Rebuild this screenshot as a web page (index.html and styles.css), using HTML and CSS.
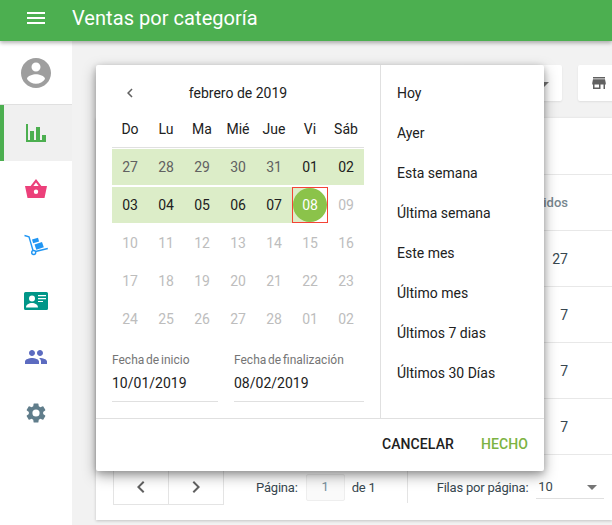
FILE: index.html
```html
<!DOCTYPE html>
<html lang="es">
<head>
<meta charset="utf-8">
<title>Ventas por categoría</title>
<link rel="stylesheet" href="styles.css">
</head>
<body>
<header class="topbar">
  <svg class="menu-icon" width="24" height="24" viewBox="0 0 24 24"><path fill="#fff" d="M3 18h18v-2H3v2zm0-5h18v-2H3v2zm0-7v2h18V6H3z"/></svg>
  <h1 class="title">Ventas por categoría</h1>
</header>
<div class="body">
  <nav class="sidebar">
    <div class="nav-user">
      <svg width="36" height="36" viewBox="0 0 24 24"><path fill="#9e9e9e" d="M12 2C6.48 2 2 6.48 2 12s4.48 10 10 10 10-4.48 10-10S17.52 2 12 2zm0 3c1.66 0 3 1.34 3 3s-1.34 3-3 3-3-1.34-3-3 1.34-3 3-3zm0 14.2c-2.5 0-4.71-1.28-6-3.22.03-1.99 4-3.08 6-3.08 1.99 0 5.97 1.09 6 3.08-1.29 1.94-3.5 3.22-6 3.22z"/></svg>
    </div>
    <div class="nav-item active">
      <svg width="24" height="24" viewBox="0 0 24 24"><path fill="#4caf50" d="M2 3h2v16h-2zM2 19h20v2H2zM6 10h4v10H6zM12 6h4v14h-4zM18 14h4v6h-4z"/></svg>
    </div>
    <div class="nav-item">
      <svg width="24" height="24" viewBox="0 0 24 24"><path fill="#ec407a" fill-rule="evenodd" d="M1 9H6.600L12 2l5.400 7H23L20.500 21H3.500L1 9zM9.300 9h5.400L12 5.500 9.300 9zM12 17a2.200 2.200 0 1 0 0-4.400 2.200 2.200 0 0 0 0 4.400z"/></svg>
    </div>
    <div class="nav-item">
      <svg width="24" height="24" viewBox="0 0 24 24"><path fill="none" stroke="#2196f3" stroke-width="1.400" d="M0.500 2.500L5 3.700 9 17.500M11.500 18.500L23.800 15.500"/><circle cx="9.700" cy="19.500" r="2" fill="none" stroke="#2196f3" stroke-width="1.400"/><path fill="#2196f3" d="M8 6.500l6-1.700 1.100 3.800-6 1.700zM10.500 11.500l7.500-2.500 1.800 5.300-7.500 2.400z"/></svg>
    </div>
    <div class="nav-item">
      <svg width="24" height="24" viewBox="0 0 24 24"><path fill="#009688" d="M1.500 3h21A1.500 1.500 0 0 1 24 4.500v15a1.500 1.500 0 0 1-1.500 1.500h-21A1.500 1.500 0 0 1 0 19.500v-15A1.500 1.500 0 0 1 1.500 3z"/><circle cx="8" cy="9.500" r="3" fill="#fff"/><path fill="#fff" d="M2 18.500c0-3 3-4.500 6-4.500s6 1.500 6 4.500zM14 6h8v1.300h-8zM14 9h8v1.300h-8zM14 12h5v1h-5z"/></svg>
    </div>
    <div class="nav-item">
      <svg width="24" height="24" viewBox="0 0 24 24"><path fill="#5c6bc0" d="M16 11c1.660 0 2.990-1.340 2.990-3S17.660 5 16 5c-1.660 0-3 1.340-3 3s1.340 3 3 3zm-8 0c1.660 0 2.990-1.340 2.990-3S9.660 5 8 5C6.340 5 5 6.340 5 8s1.340 3 3 3zm0 2c-2.330 0-7 1.170-7 3.500V19h14v-2.500c0-2.330-4.670-3.500-7-3.500zm8 0c-.29 0-.62.020-.97.050 1.160.84 1.970 1.970 1.970 3.450V19h6v-2.500c0-2.330-4.670-3.500-7-3.500z"/></svg>
    </div>
    <div class="nav-item">
      <svg width="24" height="24" viewBox="0 0 24 24"><path fill="#607d8b" d="M19.140 12.940c.04-.3.060-.61.060-.94 0-.32-.02-.64-.07-.94l2.030-1.580a.49.49 0 0 0 .12-.61l-1.920-3.320a.49.49 0 0 0-.59-.22l-2.390.96c-.5-.38-1.030-.7-1.620-.94l-.36-2.540a.48.48 0 0 0-.48-.41h-3.840a.48.48 0 0 0-.47.41l-.36 2.540c-.59.24-1.130.57-1.620.94l-2.390-.96a.48.48 0 0 0-.59.22L2.740 8.870a.48.48 0 0 0 .12.61l2.030 1.580c-.05.3-.09.63-.09.94s.02.640.07.94l-2.030 1.580a.49.49 0 0 0-.12.61l1.920 3.320c.12.22.37.29.59.22l2.390-.96c.5.380 1.030.7 1.620.94l.36 2.540c.05.24.24.41.48.41h3.840c.24 0 .44-.17.47-.41l.36-2.540c.59-.24 1.130-.56 1.620-.94l2.390.96c.22.080.47 0 .59-.22l1.920-3.320a.48.48 0 0 0-.12-.61l-2.010-1.580zM12 15.600a3.600 3.600 0 1 1 0-7.200 3.600 3.600 0 0 1 0 7.200z"/></svg>
    </div>
  </nav>
  <main class="content">
    <div class="toolbar">
      <div class="tool-select"><span class="caret"></span></div>
      <div class="tool-btn">
        <svg width="18" height="18" viewBox="0 0 24 24"><path fill="#616161" d="M20 4H4v2h16V4zm1 10v-2l-1-5H4l-1 5v2h1v6h10v-6h4v6h2v-6h1zm-9 4H6v-4h6v4z"/></svg>
      </div>
    </div>
    <section class="table-card">
      <div class="table-top"></div>
      <div class="table-row head"><span class="cell-head">Pedidos</span></div>
      <div class="table-row"><span class="cell">27</span></div>
      <div class="table-row"><span class="cell cell-b">7</span></div>
      <div class="table-row"><span class="cell cell-b">7</span></div>
      <div class="table-row"><span class="cell cell-b">7</span></div>
      <footer class="pager">
        <div class="pager-nav">
          <span class="pager-btn"><svg width="24" height="24" viewBox="0 0 24 24"><path fill="#616161" d="M15.410 7.410L14 6l-6 6 6 6 1.410-1.410L10.830 12z"/></svg></span>
          <span class="pager-btn"><svg width="24" height="24" viewBox="0 0 24 24"><path fill="#616161" d="M8.590 16.590L10 18l6-6-6-6-1.410 1.410L13.170 12z"/></svg></span>
        </div>
        <span class="pager-label">Página:</span>
        <span class="page-input">1</span>
        <span class="pager-of">de 1</span>
        <span class="pager-sep"></span>
        <span class="pager-rows">Filas por página:</span>
        <span class="rows-select">10<span class="caret dark"></span></span>
      </footer>
    </section>
  </main>
</div>

<div class="picker">
  <div class="picker-main">
    <div class="calendar">
      <div class="cal-head">
        <svg class="cal-prev" width="18" height="18" viewBox="0 0 24 24"><path fill="#616161" d="M15.410 7.410L14 6l-6 6 6 6 1.410-1.410L10.830 12z"/></svg>
        <span class="cal-month">febrero de 2019</span>
      </div>
      <div class="weekdays">
        <span>Do</span><span>Lu</span><span>Ma</span><span>Mié</span><span>Jue</span><span>Vi</span><span>Sáb</span>
      </div>
      <div class="week range first"><span class="muted">27</span><span class="muted">28</span><span class="muted">29</span><span class="muted">30</span><span class="muted">31</span><span>01</span><span>02</span></div>
      <div class="week"><span class="range-cell">03</span><span class="range-cell">04</span><span class="range-cell">05</span><span class="range-cell">06</span><span class="range-cell">07</span><span class="selected"><b class="dot">08</b></span><span class="off">09</span></div>
      <div class="week"><span class="off">10</span><span class="off">11</span><span class="off">12</span><span class="off">13</span><span class="off">14</span><span class="off">15</span><span class="off">16</span></div>
      <div class="week"><span class="off">17</span><span class="off">18</span><span class="off">19</span><span class="off">20</span><span class="off">21</span><span class="off">22</span><span class="off">23</span></div>
      <div class="week"><span class="off">24</span><span class="off">25</span><span class="off">26</span><span class="off">27</span><span class="off">28</span><span class="off">01</span><span class="off">02</span></div>
      <div class="dates">
        <div class="date-field start"><label>Fecha de inicio</label><div class="date-value">10/01/2019</div></div>
        <div class="date-field end"><label>Fecha de finalización</label><div class="date-value">08/02/2019</div></div>
      </div>
    </div>
    <ul class="presets">
      <li>Hoy</li><li>Ayer</li><li>Esta semana</li><li>Última semana</li><li>Este mes</li><li>Último mes</li><li>Últimos 7 dias</li><li>Últimos 30 Días</li>
    </ul>
  </div>
  <div class="picker-actions">
    <button class="btn">CANCELAR</button>
    <button class="btn primary">HECHO</button>
  </div>
</div>
</body>
</html>
```
FILE: styles.css
```css
* { box-sizing: border-box; }
html, body { margin: 0; height: 525px; overflow: hidden; }
body { font-family: Roboto, "Liberation Sans", sans-serif; color: #212121; background: #f2f2f2; position: relative; width: 612px; }
.topbar { height: 41px; background: #4caf50; display: flex; align-items: flex-start; padding: 6px 0 0 24px; box-shadow: 0 2px 4px rgba(0,0,0,.3); position: relative; z-index: 2; }
.menu-icon { flex: none; }
.title { margin: 0 0 0 24px; font-size: 20px; line-height: 24px; font-weight: 400; color: #fff; letter-spacing: .05px; }
.body { display: flex; height: 484px; }
.sidebar { width: 72px; background: #fff; flex: none; }
.nav-user { height: 64px; display: flex; align-items: center; justify-content: center; border-bottom: 1px solid #e0e0e0; }
.nav-item { height: 56px; display: flex; align-items: center; justify-content: center; }
.nav-item.active { background: #f0f0f0; border-left: 4px solid #4caf50; padding-right: 4px; }
.content { flex: 1; padding: 24px 0 0 24px; min-width: 0; }
.toolbar { display: flex; justify-content: flex-end; gap: 16px; height: 36px; margin-right: -8px; }
.tool-select, .tool-btn { background: #fff; border-radius: 2px; height: 36px; box-shadow: 0 1px 2px rgba(0,0,0,.08); position: relative; }
.tool-select { width: 100px; }
.tool-select .caret { position: absolute; right: 13px; top: 17px; }
.tool-btn { width: 42px; display: flex; align-items: center; justify-content: center; }
.table-card { background: #fff; margin-top: 17px; height: 402px; box-shadow: 0 1px 3px rgba(0,0,0,.2); position: relative; }
.table-top { height: 57px; border-bottom: 1px solid #e8e8e8; }
.table-row { height: 56px; border-bottom: 1px solid #e8e8e8; display: flex; justify-content: flex-end; align-items: center; padding-right: 44px; font-size: 14px; }
.table-row.head { color: #78878f; font-weight: 500; font-size: 13px; }
.cell { color: #37474f; margin-right: 0; }
.cell-b { margin-right: 0; }
.pager { height: 64px; display: flex; align-items: center; font-size: 13px; letter-spacing: -.2px; padding-left: 17px; color: #37474f; }
.pager-nav { display: flex; border: 1px solid #e4e4e4; height: 36px; margin-top: -1px; }
.pager-btn { width: 54px; display: flex; align-items: center; justify-content: center; }
.pager-btn + .pager-btn { width: 55px; border-left: 1px solid #e4e4e4; }
.pager-label { margin-left: 32px; }
.page-input { width: 39px; height: 27px; margin-left: 8px; border: 1px solid #eee; background: #fafafa; border-radius: 2px; text-align: center; line-height: 23px; color: #78909c; }
.pager-of { margin-left: 7px; }
.pager-sep { width: 1px; height: 32px; background: #e4e4e4; margin-left: 31px; }
.pager-rows { margin-left: 29px; }
.rows-select { width: 68px; height: 24px; margin-left: 8px; padding-left: 2px; border-bottom: 1px solid #e0e0e0; line-height: 24px; position: relative; }
.caret { display: inline-block; width: 0; height: 0; border-left: 5px solid transparent; border-right: 5px solid transparent; border-top: 5px solid #757575; }
.caret.dark { position: absolute; right: 7px; top: 10px; }

.picker { position: absolute; left: 96px; top: 65px; width: 448px; height: 406px; background: #fff; border-radius: 2px; box-shadow: 0 5px 14px rgba(0,0,0,.35), 0 2px 6px rgba(0,0,0,.2); z-index: 5; display: flex; flex-direction: column; }
.picker-main { display: flex; height: 354px; border-bottom: 1px solid #e0e0e0; }
.calendar { width: 285px; border-right: 1px solid #e0e0e0; padding: 0 16px; flex: none; }
.cal-head { height: 56px; position: relative; display: flex; align-items: center; justify-content: center; font-size: 14px; }
.cal-prev { position: absolute; left: 9px; top: 19px; }
.cal-month { display: block; }
.weekdays { display: grid; grid-template-columns: repeat(7, 36px); height: 27px; border-bottom: 1px solid #e0e0e0; font-size: 14px; text-align: center; line-height: 17px; }
.week { display: grid; grid-template-columns: repeat(7, 36px); height: 36px; margin-top: 2px; font-size: 14px; text-align: center; line-height: 36px; }
.week.first { margin-top: 1px; }
.range span { background: #dcedc8; }
.range-cell { background: #dcedc8; }
.muted { color: #616161; }
.off { color: #bdbdbd; }
.selected { background: linear-gradient(to right, #dcedc8 50%, transparent 50%); outline: 1px solid #f44336; outline-offset: -1px; display: block; position: relative; }
.dot { display: block; width: 34px; height: 34px; margin: 1px; border-radius: 50%; background: #8bc34a; color: #fff; font-weight: 400; line-height: 34px; }
.dates { display: flex; gap: 16px; margin-top: 15px; }
.date-field { border-bottom: 1px solid #e0e0e0; height: 50px; }
.start { width: 106px; }
.end { width: 130px; }
.date-field label { display: block; font-size: 12px; color: #757575; line-height: 16px; word-spacing: -1.200px; }
.date-value { font-size: 14px; line-height: 22px; margin-top: 4px; }
.presets { list-style: none; margin: 0; padding: 8px 0 0 16px; flex: 1; font-size: 14px; }
.presets li { height: 40px; line-height: 40px; }
.picker-actions { flex: 1; display: flex; justify-content: flex-end; align-items: center; padding: 0 16px 2px 0; gap: 27px; }
.btn { border: 0; background: none; padding: 0; font: 500 14px Roboto, "Liberation Sans", sans-serif; letter-spacing: .1px; color: #212121; }
.btn.primary { color: #7cb342; }
```
